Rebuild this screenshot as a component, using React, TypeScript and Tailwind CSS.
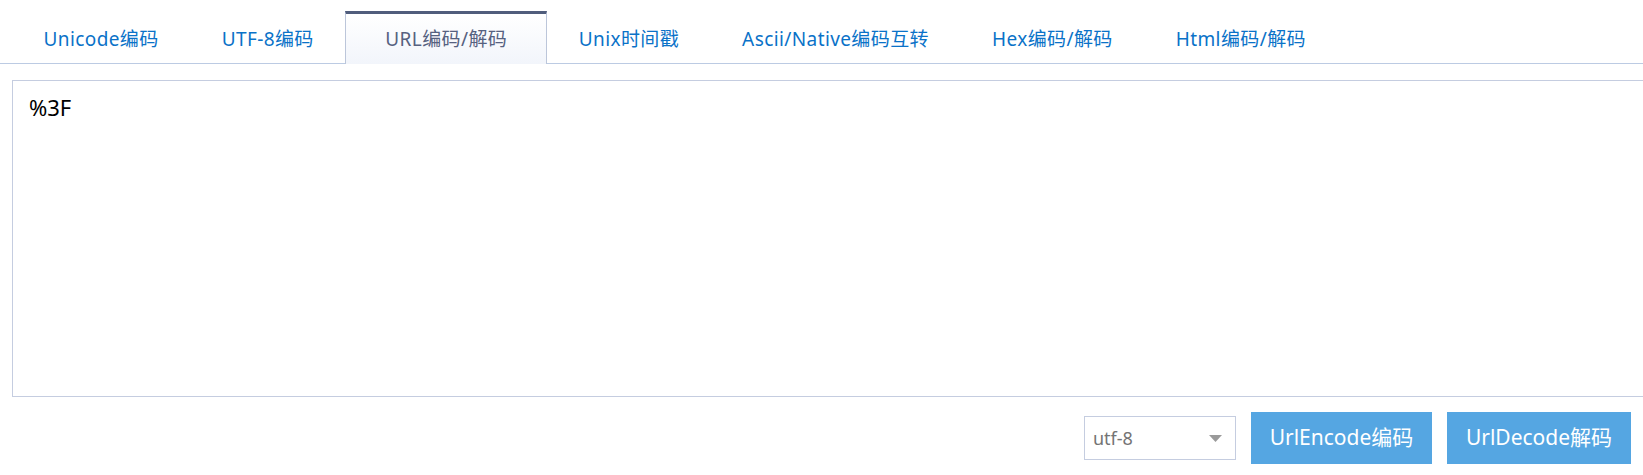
import React from "react";

const tabs = [
  "Unicode编码",
  "UTF-8编码",
  "URL编码/解码",
  "Unix时间戳",
  "Ascii/Native编码互转",
  "Hex编码/解码",
  "Html编码/解码",
];

export default function App() {
  const font = { fontFamily: '"Noto Sans", "Noto Sans CJK SC", sans-serif' };
  return (
    <div className="w-[1643px] h-[475px] overflow-hidden bg-white" style={font}>
      <div className="flex pt-[11px] pl-3 border-b border-[#bccbe3] h-[64px]">
        {tabs.map((t, i) =>
          i === 2 ? (
            <div
              key={t}
              className="h-[53px] -mb-px flex items-center px-[39px] border-t-[3px] border-t-[#505d7c] border-x border-x-[#bcc6da] bg-gradient-to-b from-white to-[#f2f5fb] text-[19px] tracking-[0.4px] text-[#566180] pt-[1px]"
            >
              {t}
            </div>
          ) : (
            <div
              key={t}
              className="h-[52px] flex items-center px-[31.5px] text-[19px] tracking-[0.4px] text-[#0a72c8] pt-[4px]"
            >
              {t}
            </div>
          )
        )}
      </div>
      <div className="pl-3 pt-4">
        <div className="w-[1700px] h-[317px] border border-[#c5cde0] px-4 pt-[10px] text-[22px] text-black">
          %3F
        </div>
      </div>
      <div className="flex justify-end items-center pr-3 pt-[15px] gap-[15px]">
        <div className="w-[152px] h-[44px] border border-[#c5cde0] flex items-center justify-between pl-2 pr-[13px] text-[18px] text-[#747474]">
          <span>utf-8</span>
          <svg width="13" height="7" viewBox="0 0 13 7">
            <polygon points="0,0 13,0 6.5,7" fill="#9a9a9a" />
          </svg>
        </div>
        <button className="h-[52px] w-[181px] bg-[#55a6e2] text-white text-[21px] flex items-center justify-center">
          UrlEncode编码
        </button>
        <button className="h-[52px] w-[184px] bg-[#55a6e2] text-white text-[21px] flex items-center justify-center">
          UrlDecode解码
        </button>
      </div>
    </div>
  );
}
